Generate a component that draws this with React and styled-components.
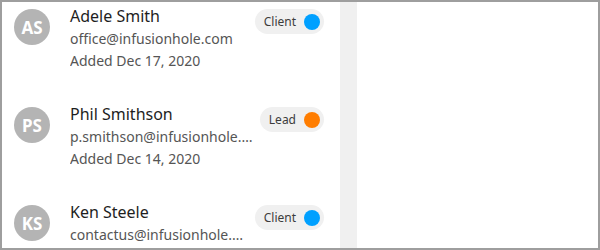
import styled, { createGlobalStyle } from "styled-components";

const GlobalStyle = createGlobalStyle`
    html, body {
        margin: 0;
        padding: 0;
        background: #ffffff;
    }
    body {
        font-family: "Noto Sans", "Open Sans", sans-serif;
    }
`

const contacts = [
    { initials: "AS", name: "Adele Smith", email: "office@infusionhole.com", added: "Added Dec 17, 2020", type: "Client" },
    { initials: "PS", name: "Phil Smithson", email: "p.smithson@infusionhole.com", added: "Added Dec 14, 2020", type: "Lead" },
    { initials: "KS", name: "Ken Steele", email: "contactus@infusionhole.com", added: "Added Dec 10, 2020", type: "Client" },
]

const dotColors = {
    Client: "#00a0ff",
    Lead: "#ff7d00",
}

export const Frame = styled.div`
    width: 600px;
    height: 250px;
    box-sizing: border-box;
    border: 2px solid #9e9e9e;
    display: flex;
    overflow: hidden;
`

export const ContactList = styled.div`
    width: 338px;
    padding: 3px 16px 0 12px;
    box-sizing: border-box;
    overflow: hidden;
    display: flex;
    flex-direction: column;
`

export const Gutter = styled.div`
    width: 17px;
    background: #f0f0f0;
    flex-shrink: 0;
`

export const DetailPane = styled.div`
    flex: 1;
    background: #ffffff;
`

export const Row = styled.div`
    display: flex;
    align-items: flex-start;
    height: 98px;
    flex-shrink: 0;
`

export const Avatar = styled.div`
    width: 36px;
    height: 36px;
    margin: 4px 20px 0 0;
    border-radius: 50%;
    background: #b4b4b4;
    color: #ffffff;
    font-size: 17px;
    font-weight: bold;
    display: flex;
    align-items: center;
    justify-content: center;
    flex-shrink: 0;
`

export const Info = styled.div`
    flex: 1;
    min-width: 0;
`

export const Name = styled.p`
    margin: 0;
    font-size: 16px;
    line-height: 23px;
    color: #1e1e1e;
`

export const Meta = styled.p`
    margin: 0;
    font-size: 14px;
    line-height: 22px;
    color: #555555;
    white-space: nowrap;
    overflow: hidden;
    text-overflow: ellipsis;
`

export const Badge = styled.div`
    display: flex;
    align-items: center;
    gap: 8px;
    height: 25px;
    margin: 4px 0 0 6px;
    padding: 0 4px 0 9px;
    border-radius: 13px;
    background: #f0f0f0;
    font-size: 12px;
    color: #3c3c3c;
    flex-shrink: 0;
`

export const Dot = styled.span`
    width: 16px;
    height: 16px;
    border-radius: 50%;
    background: ${(props) => props.color};
`

function ContactRow({ contact })
{
    return(
        <Row>
            <Avatar>{contact.initials}</Avatar>
            <Info>
                <Name>{contact.name}</Name>
                <Meta>{contact.email}</Meta>
                <Meta>{contact.added}</Meta>
            </Info>
            <Badge>
                {contact.type}
                <Dot color={dotColors[contact.type]} />
            </Badge>
        </Row>
    )
}

export default function App()
{
    return(
        <>
            <GlobalStyle />
            <Frame>
                <ContactList>
                    {contacts.map((c) => (
                        <ContactRow key={c.initials} contact={c} />
                    ))}
                </ContactList>
                <Gutter />
                <DetailPane />
            </Frame>
        </>
    )
}
